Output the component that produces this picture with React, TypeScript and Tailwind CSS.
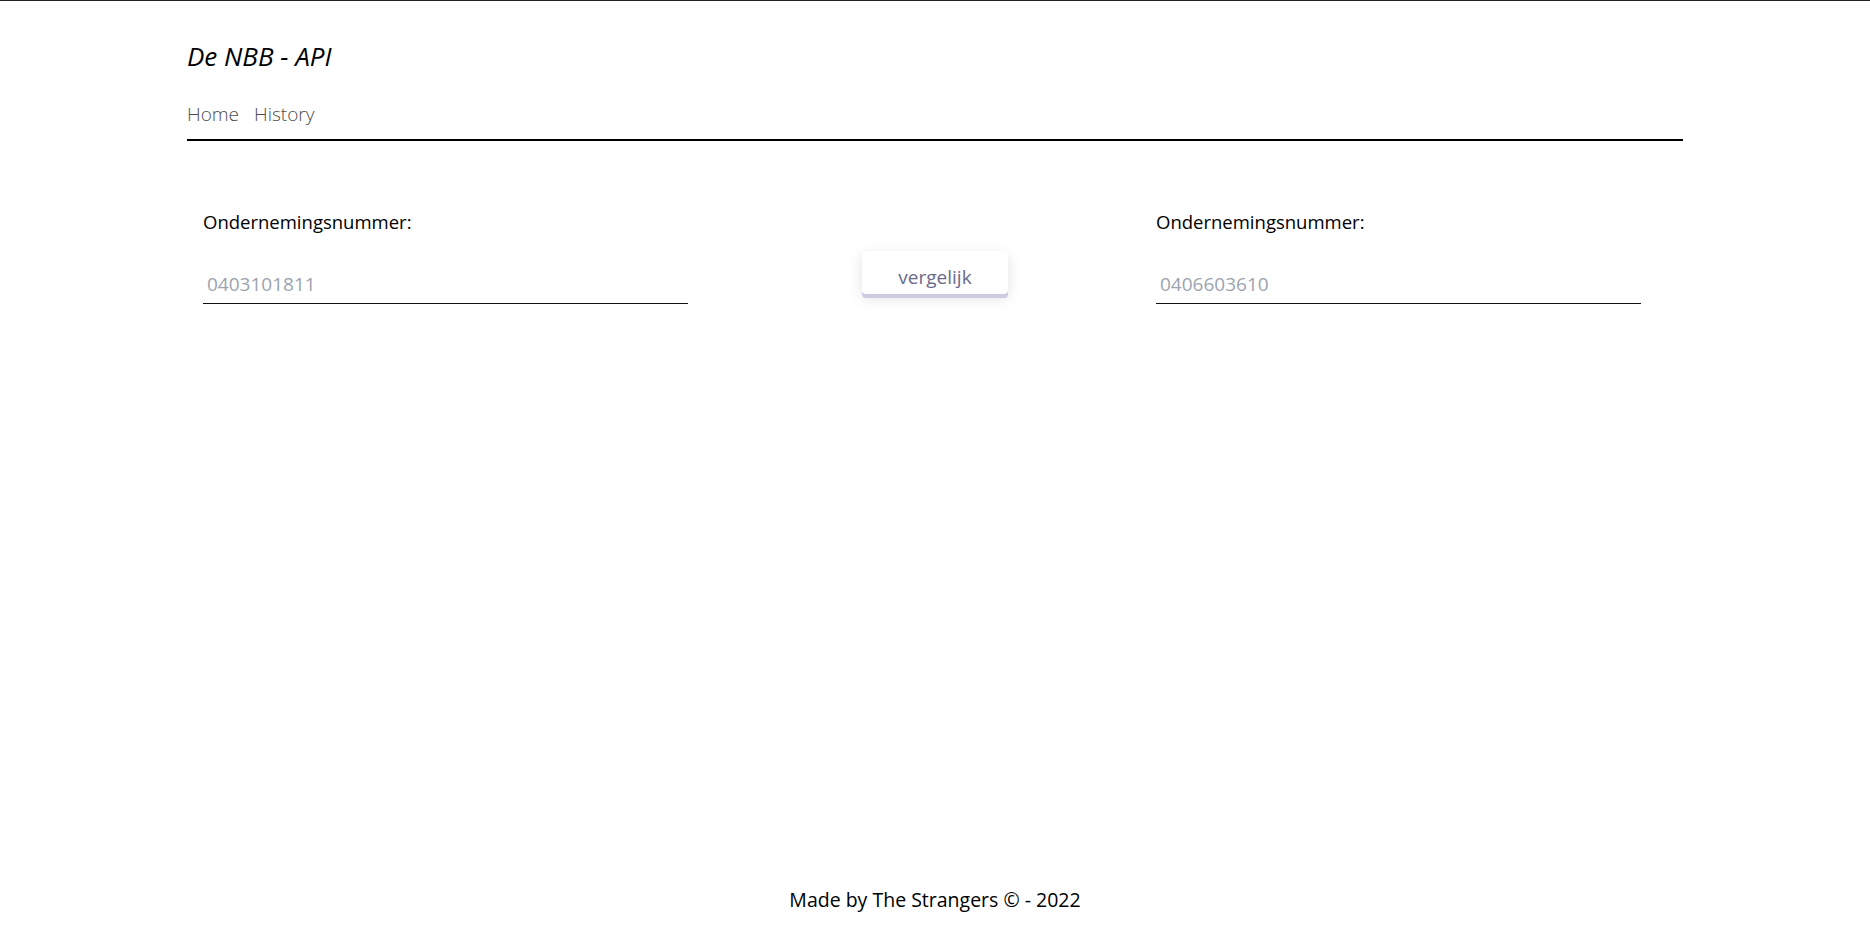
import { useState } from 'react';

const CompanyInput = ({ placeholder }: { placeholder: string }) => {
  const [value, setValue] = useState('');
  return (
    <div className="flex flex-col w-[485px]">
      <label className="text-[18.5px] leading-7 text-black">Ondernemingsnummer:</label>
      <input
        value={value}
        onChange={(e) => setValue(e.target.value)}
        placeholder={placeholder}
        className="mt-[28px] h-[40px] px-1 text-[19px] text-gray-700 placeholder:text-[#9ca3af] border-b border-[#111] outline-none bg-transparent"
      />
    </div>
  );
};

export default function App() {
  return (
    <div className="min-h-screen flex flex-col bg-white border-t border-[#222] font-['Open_Sans',sans-serif] text-black">
      {/* Header */}
      <header className="w-[1496px] mx-auto">
        <h1 className="pt-[39px] text-[26px] leading-8 italic">De NBB - API</h1>
        <nav className="mt-[28px] flex gap-[15px] pb-[11px] border-b-2 border-black text-[19px] leading-7 font-light text-[#4d4d4d]">
          <a href="#">Home</a>
          <a href="#">History</a>
        </nav>
      </header>

      {/* Compare form */}
      <main className="flex-1 w-[1496px] mx-auto">
        <div className="mt-[67px] pl-4 flex items-start">
          <CompanyInput placeholder="0403101811" />
          <button className="ml-[174px] mt-[43px] w-[146px] h-[43px] pt-[8px] rounded bg-white text-[19px] leading-7 text-[#6b6a8a] shadow-[0_4px_0_#cdcbe2,0_4px_14px_rgba(0,0,0,0.12)]">
            vergelijk
          </button>
          <div className="ml-[148px]">
            <CompanyInput placeholder="0406603610" />
          </div>
        </div>
      </main>

      <footer className="pb-[19px] text-center text-[19.5px] leading-7">
        Made by The Strangers © - 2022
      </footer>
    </div>
  );
}
